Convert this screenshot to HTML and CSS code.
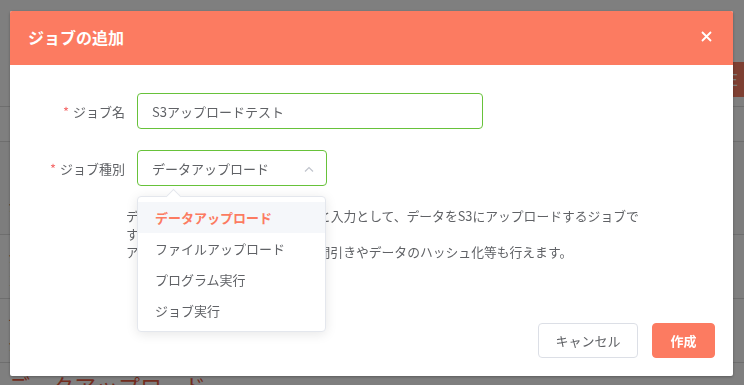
FILE: index.html
```html
<!DOCTYPE html>
<html lang="ja">
<head>
    <meta charset="UTF-8">
    <title>ジョブの追加</title>
    <link rel="stylesheet" href="styles.css">
</head>
<body>
    <!-- Page behind the dialog -->
    <div class="page">
        <div class="page-top"></div>
        <div class="page-bar"><span class="page-btn">E</span></div>
        <div class="page-row gap"></div>
        <div class="page-row head"></div>
        <div class="page-row tall"><span class="muted">ジ</span></div>
        <div class="page-row mid"><span class="red">ジ<br>ヨ</span></div>
        <div class="page-row mid"><span class="red">テ<br>ジ</span></div>
        <div class="page-title">データアップロード</div>
    </div>

    <!-- Dialog -->
    <div class="overlay">
        <div class="dialog">
            <div class="dialog-header">
                <span class="dialog-title">ジョブの追加</span>
                <svg class="close" width="11" height="11" viewBox="0 0 11 11">
                    <path d="M1 1L10 10M10 1L1 10" stroke="#fff" stroke-width="1.8" fill="none"/>
                </svg>
            </div>

            <div class="dialog-body">
                <div class="form-row">
                    <label class="form-label"><span class="req">*</span>ジョブ名</label>
                    <div class="input name-input">S3アップロードテスト</div>
                </div>

                <div class="form-row">
                    <label class="form-label"><span class="req">*</span>ジョブ種別</label>
                    <div class="select-wrap">
                        <div class="input select-input">
                            データアップロード
                            <svg class="chevron" width="10" height="6" viewBox="0 0 10 6">
                                <path d="M1 5.5L5 1.5L9 5.5" stroke="#c0c4cc" stroke-width="1.2" fill="none"/>
                            </svg>
                        </div>
                        <div class="dropdown">
                            <div class="dropdown-arrow"></div>
                            <div class="dropdown-item selected">データアップロード</div>
                            <div class="dropdown-item">ファイルアップロード</div>
                            <div class="dropdown-item">プログラム実行</div>
                            <div class="dropdown-item">ジョブ実行</div>
                        </div>
                    </div>
                </div>

                <p class="job-desc">
                    データアップロードは、ファイルと入力として、データをS3にアップロードするジョブです。<br>
                    アップロードの際には、カラムの間引きやデータのハッシュ化等も行えます。
                </p>
            </div>

            <div class="dialog-footer">
                <button class="btn btn-cancel">キャンセル</button>
                <button class="btn btn-primary">作成</button>
            </div>
        </div>
    </div>
</body>
</html>
```

FILE: styles.css
```css
html,
body {
    overflow: hidden;
}

body {
    margin: 0;
    font-family: "Noto Sans CJK JP", "Noto Sans", sans-serif;
    background: #fff;
    height: 385px;
}

/* background page */
.page {
    height: 385px;
    overflow: hidden;
}

.page-top {
    height: 62px;
}

.page-bar {
    height: 35px;
    display: flex;
    justify-content: flex-end;
}

.page-btn {
    width: 60px;
    background: #fc7e64;
    color: #fff;
    font-size: 16px;
    line-height: 35px;
    text-align: right;
    padding-right: 6px;
}

.page-row {
    border-bottom: 1px solid #ddd;
    padding-left: 8px;
    box-sizing: border-box;
}

.page-row.gap {
    height: 10px;
}

.page-row.head {
    height: 35px;
}

.page-row.tall {
    height: 93px;
    padding-top: 50px;
    background: #fafafa;
}

.page-row.mid {
    height: 64px;
    padding-top: 8px;
}

.muted {
    color: #444;
    font-size: 14px;
}

.red {
    color: #e65a3f;
    font-size: 14px;
    line-height: 18px;
}

.page-title {
    color: #e65a3f;
    font-size: 22px;
    padding: 6px 8px;
}

/* overlay + dialog */
.overlay {
    position: fixed;
    top: 0;
    left: 0;
    width: 100%;
    height: 100%;
    background: rgba(0, 0, 0, 0.5);
    padding: 11px 0 0 10px;
    box-sizing: border-box;
}

.dialog {
    width: 723px;
    height: 365px;
    background: #fff;
    border-radius: 2px;
    box-shadow: 0 1px 3px rgba(0, 0, 0, 0.3);
    display: flex;
    flex-direction: column;
}

.dialog-header {
    height: 54px;
    background: #fc7b61;
    display: flex;
    align-items: center;
    justify-content: space-between;
    padding: 0 21px 0 18px;
    border-radius: 2px 2px 0 0;
}

.dialog-title {
    color: #fff;
    font-size: 16px;
    font-weight: bold;
    margin-top: -2px;
}

.close {
    margin-top: -3px;
}

.dialog-body {
    flex: 1;
    padding: 28px 20px 0 0;
}

.form-row {
    display: flex;
    align-items: center;
    margin-bottom: 21px;
}

.form-label {
    width: 115px;
    padding-right: 12px;
    text-align: right;
    font-size: 13px;
    color: #606266;
}

.req {
    color: #f56c6c;
    margin-right: 4px;
}

.input {
    height: 36px;
    box-sizing: border-box;
    border: 1px solid #67c23a;
    border-radius: 4px;
    padding: 0 14px;
    font-size: 13px;
    color: #606266;
    display: flex;
    align-items: center;
}

.name-input {
    width: 346px;
}

.select-wrap {
    position: relative;
}

.select-input {
    width: 190px;
    justify-content: space-between;
    padding-right: 12px;
}

.chevron {
    margin-top: 1px;
}

/* dropdown */
.dropdown {
    position: absolute;
    top: 46px;
    left: 0;
    width: 189px;
    box-sizing: border-box;
    background: #fff;
    border: 1px solid #e4e7ed;
    border-radius: 4px;
    box-shadow: 0 2px 12px rgba(0, 0, 0, 0.1);
    padding: 5px 0;
    z-index: 10;
}

.dropdown-arrow {
    position: absolute;
    top: -6px;
    left: 30px;
    width: 10px;
    height: 10px;
    background: #fff;
    border-top: 1px solid #e4e7ed;
    border-left: 1px solid #e4e7ed;
    transform: rotate(45deg);
}

.dropdown-item {
    position: relative;
    height: 31px;
    line-height: 31px;
    padding: 0 17px;
    font-size: 13px;
    color: #606266;
}

.dropdown-item.selected {
    background: #f5f7fa;
    color: #fc7b61;
    font-weight: bold;
}

.job-desc {
    margin: 0 0 0 116px;
    width: 520px;
    font-size: 12.8px;
    line-height: 18px;
    color: #606266;
}

/* footer */
.dialog-footer {
    display: flex;
    justify-content: flex-end;
    padding: 0 18px 18px;
}

.btn {
    height: 35px;
    border-radius: 4px;
    font-family: inherit;
    font-size: 13px;
    cursor: pointer;
}

.btn-cancel {
    width: 100px;
    background: #fff;
    border: 1px solid #dcdfe6;
    color: #606266;
}

.btn-primary {
    width: 63px;
    margin-left: 14px;
    background: #fc7b61;
    border: 1px solid #fc7b61;
    color: #fff;
    font-weight: bold;
}
```
